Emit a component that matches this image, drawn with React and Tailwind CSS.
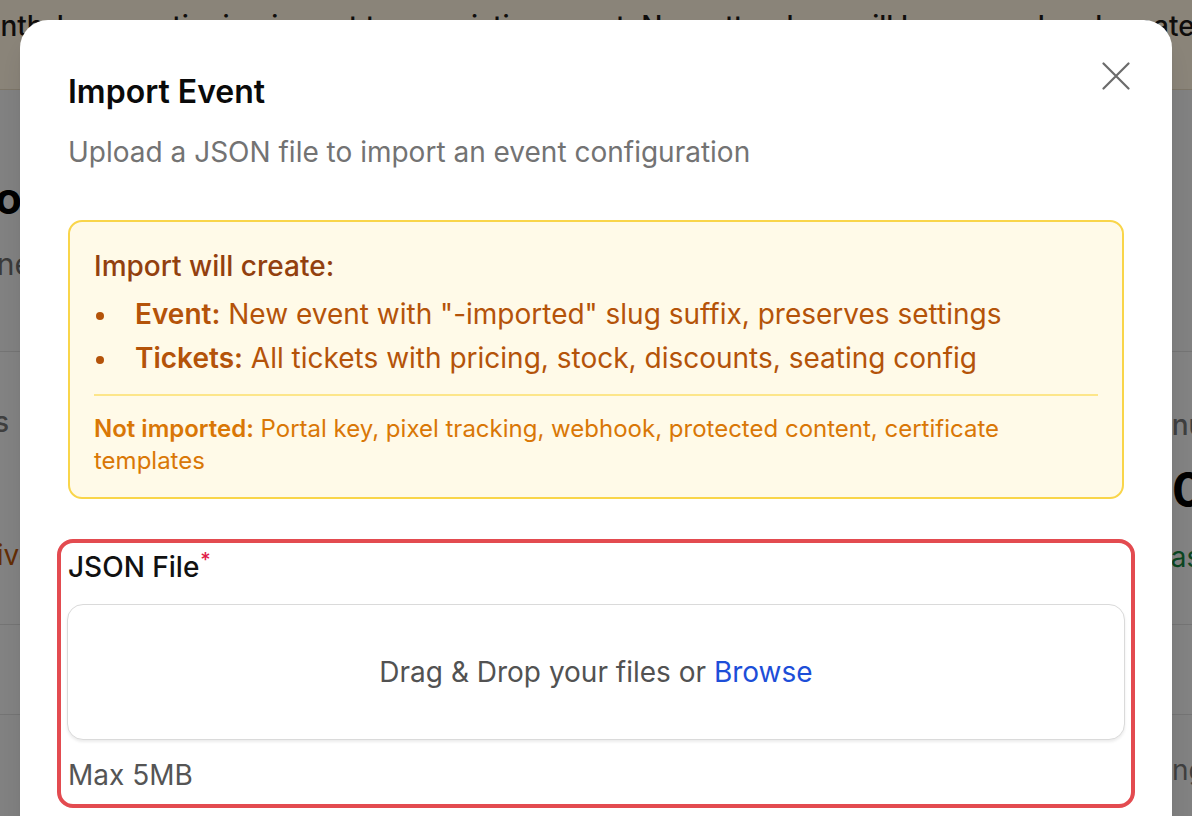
import { useState } from 'react'

/**
 * Import Event dialog, shown over the event dashboard.
 * Page behind is dimmed by an overlay; only its edges peek out.
 */

function CloseIcon() {
  return (
    <svg width="28" height="28" viewBox="0 0 28 28" fill="none">
      <path d="M1.5 1.5 L26.5 26.5 M26.5 1.5 L1.5 26.5" stroke="#6b6b6b" strokeWidth="2.2" strokeLinecap="round" />
    </svg>
  )
}

function Bullet() {
  return (
    <span className="w-[41px] shrink-0 pt-[20px] pl-[2px]">
      <span className="block h-[8px] w-[8px] rounded-full bg-current" />
    </span>
  )
}

function BackgroundPage() {
  return (
    <div className="flex h-full flex-col bg-[#ebebeb] font-['Inter','Noto_Sans',sans-serif]">
      {/* notice banner */}
      <div className="h-[90px] shrink-0 overflow-hidden border-b border-[#e2d6bd] bg-[#fbf1dd]">
        <p className="-ml-[42px] whitespace-nowrap pt-[6px] text-[28px] font-medium leading-[40px] text-[#1c1917]">
          Month-long continuing import to an existing event. New attendees will be merged and created
        </p>
      </div>

      {/* header */}
      <div className="flex h-[262px] shrink-0 justify-between border-b border-[#d4d4d4]">
        <div className="flex w-[22px] flex-col items-end overflow-hidden pt-[82px]">
          <span className="whitespace-nowrap text-[44px] font-bold leading-[52px] text-black">Demo</span>
          <span className="-mr-[10px] mt-[20px] whitespace-nowrap text-[30px] leading-[40px] text-[#6b6b6b]">Online</span>
        </div>
      </div>

      {/* stats */}
      <div className="flex h-[273px] shrink-0 justify-between border-b border-[#d4d4d4] bg-[#ededed]">
        <div className="flex w-[22px] flex-col items-end overflow-hidden pt-[50px]">
          <span className="whitespace-nowrap pr-[13px] text-[28px] font-medium leading-[40px] text-[#737373]">Tickets</span>
          <span className="-mr-[13px] mt-[93px] whitespace-nowrap text-[28px] leading-[40px] text-[#b45309]">Active</span>
        </div>
        <div className="flex w-[20px] flex-col items-start overflow-hidden pt-[53px]">
          <span className="-ml-[66px] whitespace-nowrap text-[28px] font-medium leading-[40px] text-[#737373]">Revenue</span>
          <span className="mt-[17px] whitespace-nowrap text-[48px] font-bold leading-[56px] text-black">000</span>
          <span className="-ml-[17px] mt-[19px] whitespace-nowrap text-[28px] leading-[40px] text-[#15803d]">Last week</span>
        </div>
      </div>

      <div className="h-[90px] shrink-0 border-b border-[#d4d4d4] bg-[#ededed]" />

      <div className="flex flex-1 justify-end">
        <div className="flex w-[20px] flex-col items-start overflow-hidden pt-[35px]">
          <span className="whitespace-nowrap text-[28px] leading-[40px] text-[#737373]">ngs</span>
        </div>
      </div>
    </div>
  )
}

export default function App() {
  const [fileName] = useState(null)

  return (
    <div className="relative h-[816px] w-full overflow-hidden font-['Inter','Noto_Sans',sans-serif]">
      <BackgroundPage />

      {/* dim overlay */}
      <div className="absolute inset-0 bg-black/45" />

      {/* dialog */}
      <div className="absolute left-[20px] top-[20px] h-[840px] w-[1152px] rounded-[28px] bg-white px-[48px] pt-[52px] shadow-xl">
        <button className="absolute right-[42px] top-[42px]" aria-label="Close">
          <CloseIcon />
        </button>

        <h2 className="text-[32px] font-semibold leading-[40px] text-[#0a0a0a]">Import Event</h2>
        <p className="mt-[20px] text-[28px] leading-[40px] text-[#737373]">
          Upload a JSON file to import an event configuration
        </p>

        {/* what gets imported */}
        <div className="mt-[48px] rounded-[14px] border-2 border-[#f9d54a] bg-[#fffae8] px-[24px] pb-[20px] pt-[22px]">
          <div className="text-[28px] font-medium leading-[44px] text-[#92400e]">Import will create:</div>
          <ul className="mt-[4px] text-[28px] leading-[44px] text-[#b45309]">
            <li className="flex">
              <Bullet />
              <span>
                <b className="font-semibold">Event:</b> New event with "-imported" slug suffix, preserves settings
              </span>
            </li>
            <li className="flex">
              <Bullet />
              <span>
                <b className="font-semibold">Tickets:</b> All tickets with pricing, stock, discounts, seating config
              </span>
            </li>
          </ul>
          <div className="mt-[14px] border-t-2 border-[#fde68a]" />
          <p className="mt-[17px] text-[24px] leading-[32px] text-[#d97706]">
            <b className="font-semibold">Not imported:</b> Portal key, pixel tracking, webhook, protected content, certificate templates
          </p>
        </div>

        {/* file field */}
        <div className="-mx-[11px] mt-[40px] rounded-[16px] border-4 border-[#e34b50] px-[6px] pb-[9px] pt-[4px]">
          <label className="block pl-[1px] text-[28px] font-medium leading-[40px] text-[#111]">
            JSON File<sup className="ml-[1px] text-[20px] text-[#e11d48]">*</sup>
          </label>
          <div className="mt-[17px] flex h-[136px] items-center justify-center rounded-[16px] border-[1.5px] border-[#dadada] bg-white shadow-[0_2px_3px_rgba(0,0,0,0.08)]">
            <span className="text-[28px] leading-[40px] text-[#525252]">
              {fileName ?? 'Drag & Drop your files or '}
              <span className="text-[#1d4ed8]">Browse</span>
            </span>
          </div>
          <div className="mt-[15px] pl-[1px] text-[28px] leading-[40px] text-[#555]">Max 5MB</div>
        </div>
      </div>
    </div>
  )
}
